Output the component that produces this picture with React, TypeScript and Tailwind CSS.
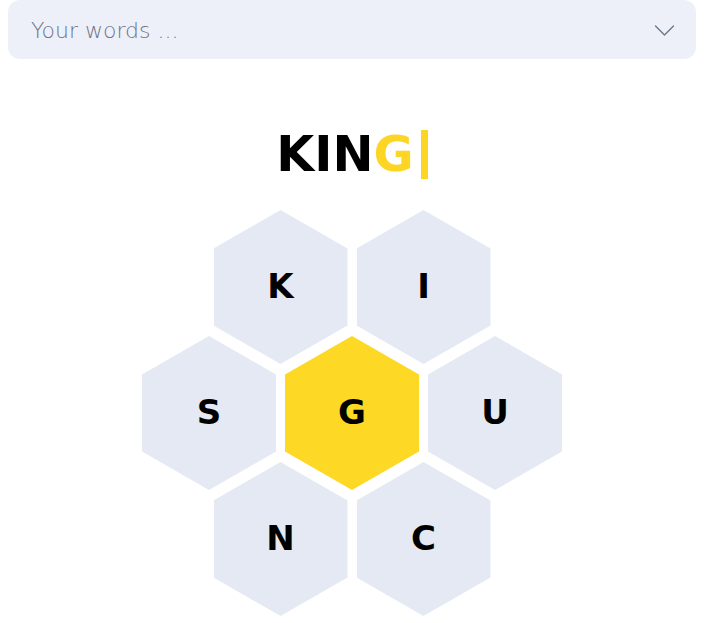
const hexClip = "[clip-path:polygon(50%_0,100%_25%,100%_75%,50%_100%,0_75%,0_25%)]";

function Hex({ letter, center = false }: { letter: string; center?: boolean }) {
  return (
    <div
      className={`${hexClip} w-[134px] h-[154px] flex items-center justify-center pb-[2px] text-[34px] leading-none font-bold text-black select-none ${
        center ? "bg-[#fdd824]" : "bg-[#e4e9f3]"
      }`}
    >
      {letter}
    </div>
  );
}

export default function App() {
  return (
    <div className="w-full min-h-[623px] bg-white font-['DejaVu_Sans',sans-serif]">
      <div className="mx-2 h-[59px] rounded-xl bg-[#edf0f8] flex items-center justify-between pl-[23px] pr-[20px]">
        <span className="pt-[3px] text-[22px] leading-none font-extralight text-[#6f7485]">Your words ...</span>
        <svg width="21" height="13" viewBox="0 0 21 13" fill="none" className="mr-[1px] mt-[2px]">
          <path d="M1.5 2 L10.5 11 L19.5 2" stroke="#6b7588" strokeWidth="1.3" strokeLinecap="round" strokeLinejoin="round" />
        </svg>
      </div>

      <div className="mt-[71px] flex justify-center items-center h-[49px]">
        <span className="text-[49px] leading-none font-bold text-black">
          KIN<span className="text-[#fdd524]">G</span>
        </span>
        <span className="ml-[7px] w-[7px] h-[49px] bg-[#fdd524]" />
      </div>

      <div className="mt-[31px] flex flex-col items-center">
        <div className="flex gap-[9px]">
          <Hex letter="K" />
          <Hex letter="I" />
        </div>
        <div className="flex gap-[9px] -mt-[28px]">
          <Hex letter="S" />
          <Hex letter="G" center />
          <Hex letter="U" />
        </div>
        <div className="flex gap-[9px] -mt-[28px]">
          <Hex letter="N" />
          <Hex letter="C" />
        </div>
      </div>
    </div>
  );
}
